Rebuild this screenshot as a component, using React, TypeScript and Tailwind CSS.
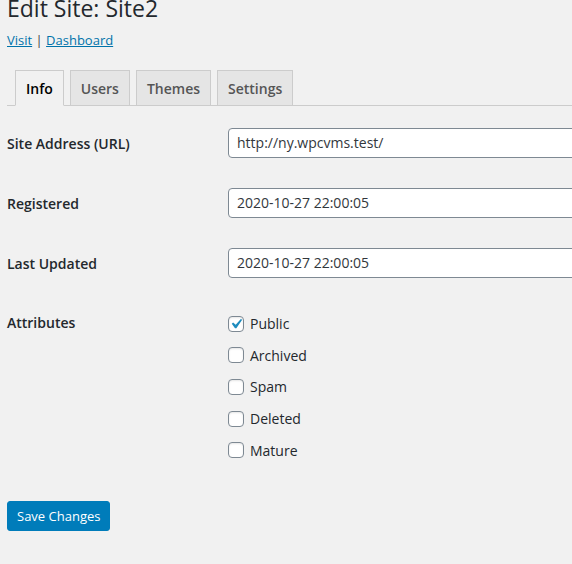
import React from "react";

const font = { fontFamily: '"Open Sans", "Noto Sans", sans-serif' };

function Checkbox({ checked }: { checked?: boolean }) {
  return (
    <span className="relative w-4 h-4 shrink-0 rounded-[4px] border border-[#7e8993] bg-white shadow-[inset_0_1px_2px_rgba(0,0,0,0.1)]">
      {checked && (
        <svg viewBox="0 0 20 20" className="absolute left-[-3px] top-[-3px] w-[20px] h-[20px]">
          <path
            d="M14.83 4.89l1.34.94-5.81 8.38H9.02L5.78 9.67l1.34-1.25 2.57 2.4z"
            fill="#1e8cbe"
          />
        </svg>
      )}
    </span>
  );
}

export default function App() {
  const tabs = ["Info", "Users", "Themes", "Settings"];
  const rows = [
    { label: "Site Address (URL)", value: "http://ny.wpcvms.test/" },
    { label: "Registered", value: "2020-10-27 22:00:05" },
    { label: "Last Updated", value: "2020-10-27 22:00:05" },
  ];
  const attrs = [
    { name: "Public", checked: true },
    { name: "Archived" },
    { name: "Spam" },
    { name: "Deleted" },
    { name: "Mature" },
  ];
  return (
    <div className="min-h-[564px] w-[572px] overflow-hidden bg-[#f1f1f1] text-[#23282d]" style={font}>
      <div className="pl-[7px]">
        <h1 className="text-[23px] leading-[29px] font-normal text-[#23282d] mt-[-6px] whitespace-nowrap">
          Edit Site: Site2
        </h1>
        <p className="text-[13px] leading-[20px] mt-[7px] text-[#444]">
          <a className="text-[#0073aa] underline">Visit</a> |{" "}
          <a className="text-[#0073aa] underline">Dashboard</a>
        </p>
        <div className="mt-[20px] flex border-b border-[#ccc] pl-2 gap-[6px]">
          {tabs.map((t, i) => (
            <div
              key={t}
              className={
                "mb-[-1px] border border-[#ccc] px-[10px] pt-[6px] pb-[4px] text-[14px] leading-[24px] font-semibold whitespace-nowrap " +
                (i === 0
                  ? "bg-[#f1f1f1] border-b-[#f1f1f1] text-black"
                  : "bg-[#e5e5e5] text-[#555]")
              }
            >
              {t}
            </div>
          ))}
        </div>
        <div className="mt-[7px]">
          {rows.map((r) => (
            <div key={r.label} className="flex">
              <div className="w-[221px] shrink-0 pt-[21px] pb-[19px] text-[14px] leading-[20px] font-semibold whitespace-nowrap">
                {r.label}
              </div>
              <div className="py-[15px] flex-1">
                <div className="h-[30px] w-[400px] rounded-[4px] border border-[#7e8993] bg-white px-2 text-[14px] leading-[28px] text-[#32373c] whitespace-nowrap">
                  {r.value}
                </div>
              </div>
            </div>
          ))}
          <div className="flex">
            <div className="w-[221px] shrink-0 pt-[20px] text-[14px] leading-[20px] font-semibold">
              Attributes
            </div>
            <div className="pt-[15px] flex flex-col">
              {attrs.map((a) => (
                <label key={a.name} className="flex items-center h-[31.6px] text-[14px] text-[#23282d]">
                  <Checkbox checked={a.checked} />
                  <span className="ml-[6px]">{a.name}</span>
                </label>
              ))}
            </div>
          </div>
        </div>
        <div className="mt-[35px]">
          <button className="h-[30px] rounded-[3px] bg-[#007cba] border border-[#007cba] px-[9px] text-[13px] leading-[28px] text-white">
            Save Changes
          </button>
        </div>
      </div>
    </div>
  );
}
